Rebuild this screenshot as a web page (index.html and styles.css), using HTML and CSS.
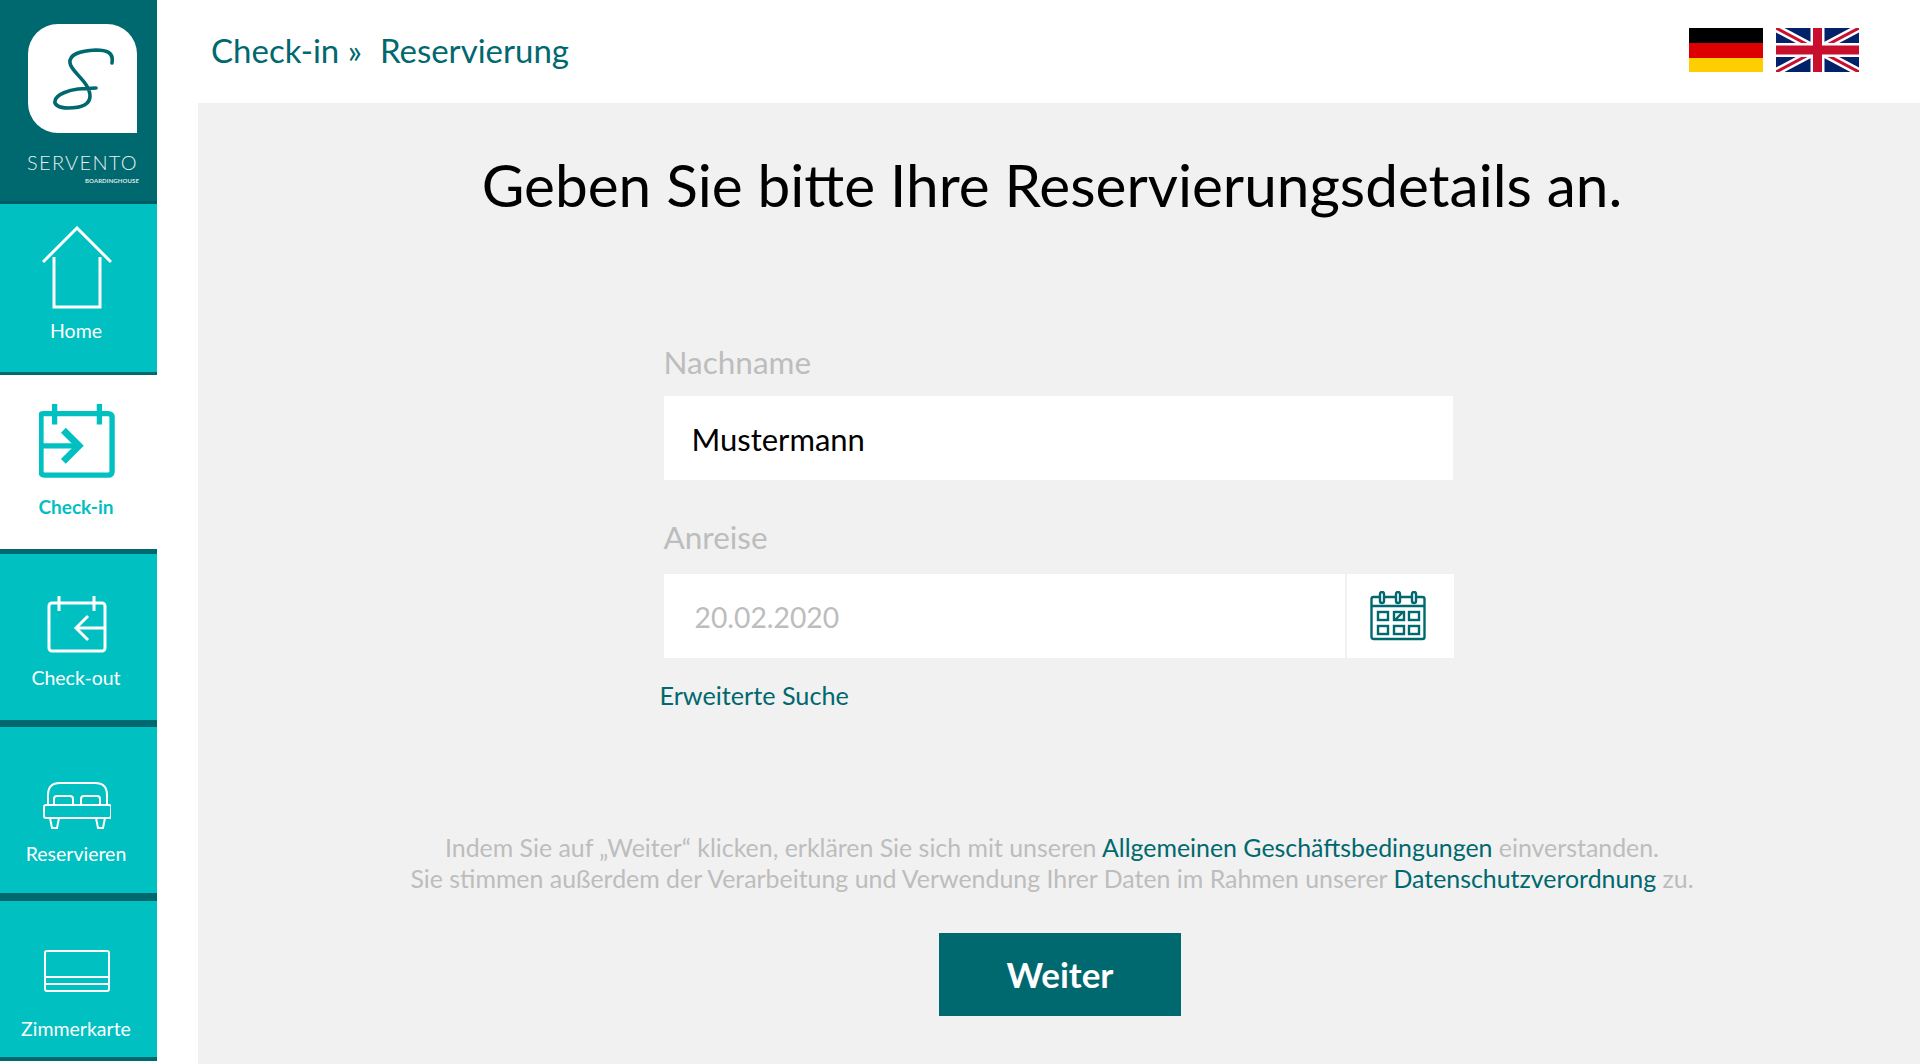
FILE: index.html
```html
<!DOCTYPE html>
<html lang="de">
<head>
  <meta charset="UTF-8">
  <title>Servento – Check-in Reservierung</title>
  <link rel="stylesheet" href="styles.css">
</head>
<body>
  <div class="page">
    <nav class="sidebar">
      <div class="brand">
        <div class="brand-mark">
          <svg viewBox="0 0 109 109" width="109" height="109">
            <path d="M84 39 C86 28 78 26 68 26 C52 27 41 30 42 39 C43 48 62 58 62 72 C62 82 50 84 40 84 C30 84 26 80 27 77 C28 70 42 66 50 65 L68 64" fill="none" stroke="#00686f" stroke-width="3.6" stroke-linecap="round"/>
          </svg>
        </div>
        <div class="brand-name">SERVENTO</div>
        <div class="brand-sub">BOARDINGHOUSE</div>
      </div>

      <a class="nav-item home">
        <svg class="icon" viewBox="0 0 70 84" width="70" height="84" fill="none" stroke="#fff" stroke-width="3">
          <path d="M1 36 L35 2 L69 36"/>
          <path d="M12 31 V81 H58 V31"/>
        </svg>
        <span>Home</span>
      </a>

      <a class="nav-item active checkin">
        <svg class="icon" viewBox="0 -1 78 78" width="76" height="76" fill="none" stroke="#00c0c1" stroke-width="5.5">
          <path d="M4 11 H71 Q75 11 75 15 V70 Q75 74 71 74 H6 Q2 74 2 70 V13 Q2 11 4 11 Z"/>
          <path d="M16 1 V22 M62 1 V22"/>
          <path d="M2 44 H38"/>
          <path d="M25 28 L41 44 L25 60" stroke-width="7"/>
        </svg>
        <span>Check-in</span>
      </a>

      <a class="nav-item checkout">
        <svg class="icon" viewBox="0 0 60 58" width="60" height="58" fill="none" stroke="#fff" stroke-width="3">
          <rect x="2" y="8" width="56" height="48" rx="3"/>
          <path d="M12 1 V16 M47 1 V16"/>
          <path d="M58 33 H30"/>
          <path d="M41 21 L29 33 L41 45"/>
        </svg>
        <span>Check-out</span>
      </a>

      <a class="nav-item reserve">
        <svg class="icon" viewBox="0 0 68 47" width="68" height="47" fill="none" stroke="#fff" stroke-width="2">
          <path d="M5 23 V13 Q5 1 17 1 H52 Q64 1 64 13 V23"/>
          <path d="M11 23 V17 Q11 14 14 14 H27 Q30 14 30 17 V23"/>
          <path d="M38 23 V17 Q38 14 41 14 H54 Q57 14 57 17 V23"/>
          <rect x="1" y="23" width="67" height="13" rx="2"/>
          <path d="M7 36 L9 46 H14 L16 36 M53 36 L55 46 H60 L62 36"/>
        </svg>
        <span>Reservieren</span>
      </a>

      <a class="nav-item card">
        <svg class="icon" viewBox="0 0 66 42" width="66" height="42" fill="none" stroke="#fff" stroke-width="2">
          <rect x="1" y="1" width="64" height="40" rx="2"/>
          <path d="M1 27 H65 M1 34 H65"/>
        </svg>
        <span>Zimmerkarte</span>
      </a>
    </nav>

    <div class="main">
      <header class="topbar">
        <div class="crumbs"><span>Check-in »</span><span>Reservierung</span></div>
        <div class="flags">
          <svg viewBox="0 0 74 44" width="74" height="44">
            <rect width="74" height="15" fill="#000"/>
            <rect y="15" width="74" height="15" fill="#dd0000"/>
            <rect y="30" width="74" height="14" fill="#ffce00"/>
          </svg>
          <svg viewBox="0 0 83 44" width="83" height="44">
            <rect width="83" height="44" fill="#012169"/>
            <path d="M0 0 L83 44 M83 0 L0 44" stroke="#fff" stroke-width="8"/>
            <path d="M0 0 L83 44 M83 0 L0 44" stroke="#c8102e" stroke-width="3"/>
            <path d="M41.5 0 V44 M0 22 H83" stroke="#fff" stroke-width="14"/>
            <path d="M41.5 0 V44 M0 22 H83" stroke="#c8102e" stroke-width="9"/>
          </svg>
        </div>
      </header>

      <main class="content">
        <h1>Geben Sie bitte Ihre Reservierungsdetails an.</h1>

        <form class="form">
          <label class="label">Nachname</label>
          <div class="field name-field">Mustermann</div>

          <label class="label">Anreise</label>
          <div class="date-row">
            <div class="field date-field">20.02.2020</div>
            <div class="date-btn">
              <svg viewBox="0 0 56 50" width="56" height="50" fill="none" stroke="#00686f" stroke-width="2.4">
                <rect x="1.5" y="6" width="53" height="42" rx="2"/>
                <path d="M1.5 15 H54.5"/>
                <rect x="10" y="1" width="4" height="11" rx="2" fill="#fff"/>
                <rect x="26" y="1" width="4" height="11" rx="2" fill="#fff"/>
                <rect x="42" y="1" width="4" height="11" rx="2" fill="#fff"/>
                <rect x="8" y="21" width="10" height="8"/>
                <rect x="24" y="21" width="10" height="8"/>
                <path d="M25 29 L33 21"/>
                <rect x="39" y="21" width="10" height="8"/>
                <rect x="8" y="35" width="10" height="8"/>
                <rect x="24" y="35" width="10" height="8"/>
                <rect x="39" y="35" width="10" height="8"/>
              </svg>
            </div>
          </div>
          <a class="more-link">Erweiterte Suche</a>
        </form>

        <p class="legal">
          Indem Sie auf „Weiter“ klicken, erklären Sie sich mit unseren <a>Allgemeinen Geschäftsbedingungen</a> einverstanden.<br>
          Sie stimmen außerdem der Verarbeitung und Verwendung Ihrer Daten im Rahmen unserer <a>Datenschutzverordnung</a> zu.
        </p>

        <button class="next-btn" type="button">Weiter</button>
      </main>
    </div>
  </div>
</body>
</html>
```

FILE: styles.css
```css
html, body {
  margin: 0;
  height: 100%;
}

body {
  font-family: Lato, "Open Sans", sans-serif;
  background: #fff;
  overflow: hidden;
}

.page {
  display: flex;
  height: 1064px;
}

/* Sidebar */
.sidebar {
  width: 157px;
  flex-shrink: 0;
  display: flex;
  flex-direction: column;
}

.brand {
  height: 177px;
  background: #00686f;
  color: #fff;
  padding: 24px 18px 0 28px;
  border-bottom: 3px solid #005c63;
}

.brand-mark {
  width: 109px;
  height: 109px;
  background: #fff;
  border-radius: 30px 30px 0 30px;
}

.brand-mark svg {
  display: block;
}

.brand-name {
  margin: 17px 0 0 -1px;
  font-size: 20px;
  line-height: 24px;
  font-weight: 300;
  letter-spacing: 1.3px;
  white-space: nowrap;
  opacity: 0.9;
}

.brand-sub {
  font-size: 6px;
  line-height: 8px;
  font-weight: 700;
  letter-spacing: 0.1px;
  text-align: right;
  margin-top: 3px;
  opacity: 0.85;
}

.nav-item {
  display: flex;
  flex-direction: column;
  align-items: center;
  background: #00c0c1;
  color: #fff;
  font-size: 19.5px;
  box-sizing: border-box;
  border-bottom: 3px solid #00686f;
  padding-right: 3px;
}

.nav-item .icon {
  display: block;
  flex-shrink: 0;
}

.nav-item span {
  margin-right: 2px;
  line-height: 24px;
  white-space: nowrap;
}

.home {
  height: 171px;
  padding-top: 22px;
}

.home span {
  margin-top: 9px;
}

.active {
  height: 179px;
  padding-top: 27px;
  background: #fff;
  color: #00c0c1;
  font-size: 19px;
  font-weight: 700;
  border-bottom-width: 5px;
}

.active span {
  margin-top: 17px;
}

.checkout {
  height: 173px;
  padding-top: 41px;
  border-bottom-width: 7px;
}

.checkout span {
  margin-top: 13px;
}

.reserve {
  height: 174px;
  padding-top: 55px;
  border-bottom-width: 8px;
}

.reserve span {
  margin-top: 13px;
}

.card {
  height: 160px;
  padding-top: 49px;
  border-bottom-width: 4px;
}

.card span {
  margin-top: 25px;
}

/* Top bar */
.main {
  flex: 1;
  min-width: 0;
  display: flex;
  flex-direction: column;
  padding-left: 41px;
}

.topbar {
  height: 103px;
  flex-shrink: 0;
  box-sizing: border-box;
  display: flex;
  align-items: center;
  justify-content: space-between;
  padding: 0 61px 3px 13px;
}

.crumbs {
  display: flex;
  gap: 18px;
  font-size: 33px;
  color: #00686f;
}

.flags {
  display: flex;
  gap: 13px;
}

.flags svg {
  display: block;
}

/* Content */
.content {
  flex: 1;
  background: #f1f1f1;
  display: flex;
  flex-direction: column;
  align-items: center;
}

h1 {
  margin: 45px 14px 0 0;
  font-size: 58.5px;
  line-height: 72px;
  font-weight: 400;
  color: #000;
}

.form {
  width: 790px;
  margin: 122px 1px 0 0;
  display: flex;
  flex-direction: column;
}

.label {
  font-size: 31.5px;
  line-height: 40px;
  color: #bdbdbd;
}

.field {
  height: 84px;
  background: #fff;
  display: flex;
  align-items: center;
  padding-left: 28px;
  box-sizing: border-box;
}

.name-field {
  color: #000;
  font-size: 31px;
  padding-top: 2px;
  margin: 14px 1px 37px 0;
}

.date-row {
  display: flex;
  gap: 2px;
  margin-top: 17px;
}

.date-field {
  flex: 1;
  padding-left: 31px;
  padding-top: 2px;
  color: #bdbdbd;
  font-size: 28.3px;
}

.date-btn {
  width: 107px;
  height: 84px;
  background: #fff;
  display: flex;
  align-items: center;
  justify-content: center;
  padding-right: 4px;
  box-sizing: border-box;
}

.more-link {
  margin: 19px 0 0 -4px;
  font-size: 25.2px;
  line-height: 36px;
  color: #00686f;
}

.legal {
  margin: 119px 14px 0 0;
  font-size: 24.9px;
  line-height: 31px;
  color: #bdbdbd;
  text-align: center;
  white-space: nowrap;
}

.legal a {
  color: #00686f;
}

.next-btn {
  margin-top: 39px;
  margin-left: 2px;
  width: 242px;
  height: 83px;
  border: none;
  background: #00686f;
  color: #fff;
  font-family: inherit;
  font-size: 35px;
  font-weight: 700;
  padding-bottom: 3px;
}
```
